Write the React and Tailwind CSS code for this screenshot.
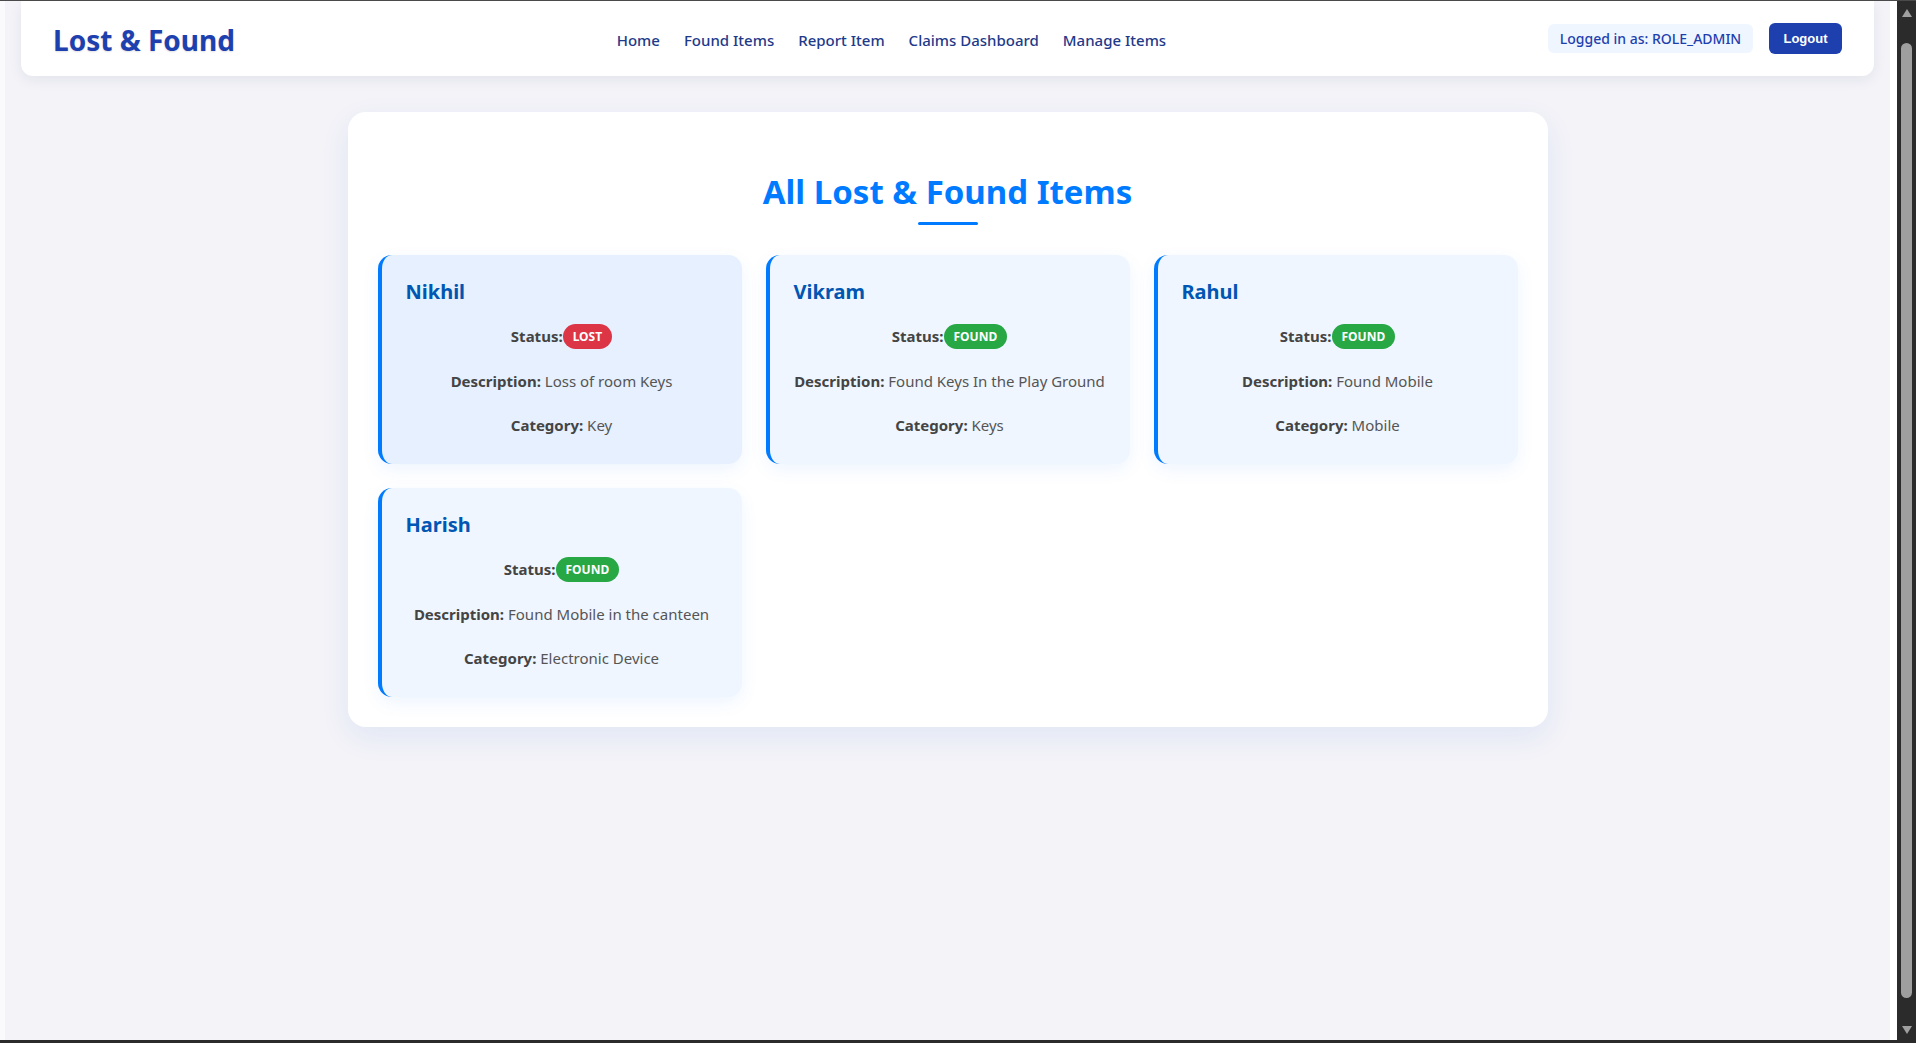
import React from "react";

const items = [
  { id: 1, name: "Nikhil", status: "LOST", description: "Loss of room Keys", category: "Key", active: true },
  { id: 2, name: "Vikram", status: "FOUND", description: "Found Keys In the Play Ground", category: "Keys" },
  { id: 3, name: "Rahul", status: "FOUND", description: "Found Mobile", category: "Mobile" },
  { id: 4, name: "Harish", status: "FOUND", description: "Found Mobile in the canteen", category: "Electronic Device" },
];

const navLinks = ["Home", "Found Items", "Report Item", "Claims Dashboard", "Manage Items"];

const Navbar = () => {
  return (
    <nav className="mx-4 flex h-[75px] items-center justify-between rounded-b-xl bg-white px-8 shadow-[0_4px_14px_rgba(30,41,90,0.07)]">
      <h1 className="mt-[3px] text-[28px] font-bold leading-9 text-[#1e40af] [text-shadow:0_1px_2px_rgba(0,0,0,0.12)]">
        Lost &amp; Found
      </h1>
      <div className="mt-[3px] flex items-center gap-6">
        {navLinks.map((link) => (
          <a key={link} href="#" className="text-[15px] font-medium text-[#1e3a8a]">
            {link}
          </a>
        ))}
      </div>
      <div className="flex items-center gap-4">
        <span className="flex h-[29px] w-[205px] items-center justify-center rounded-md bg-[#eff6ff] text-[14px] font-medium text-[#1e40af]">
          Logged in as: ROLE_ADMIN
        </span>
        <button className="flex h-[31px] w-[73px] items-center justify-center rounded-md bg-[#1e40af] font-['Liberation_Sans',sans-serif] text-[13px] font-bold text-white">
          Logout
        </button>
      </div>
    </nav>
  );
};

const ItemCard = ({ item }) => {
  const lost = item.status === "LOST";
  return (
    <div
      className={`flex flex-col rounded-[14px] border-l-4 border-[#007bff] px-5 pb-[27px] pt-[23px] shadow-[0_6px_18px_rgba(0,110,255,0.07)] ${
        item.active ? "bg-[#e6f0fe]" : "bg-[#eff6ff]"
      }`}
    >
      <h3 className="ml-1 text-[20px] font-bold leading-7 text-[#0056b3]">{item.name}</h3>
      <div className="mt-[18px] flex flex-col gap-5 text-[15px] text-[#555]">
        <div className="flex h-[25px] items-center justify-center">
          <span className="font-bold text-[#444]">Status:</span>
          <span
            className={`flex h-[25px] items-center rounded-full px-[10px] text-[12px] font-bold text-white ${
              lost ? "bg-[#dc3545]" : "bg-[#28a745]"
            }`}
          >
            {item.status}
          </span>
        </div>
        <p className="whitespace-nowrap text-center leading-6">
          <span className="font-bold text-[#444]">Description:</span> {item.description}
        </p>
        <p className="whitespace-nowrap text-center leading-6">
          <span className="font-bold text-[#444]">Category:</span> {item.category}
        </p>
      </div>
    </div>
  );
};

const Scrollbar = () => {
  return (
    <div className="flex w-[19px] flex-col items-center bg-[#2b2b2b] pb-[6px] pt-[8px]">
      <div className="h-0 w-0 border-x-[5px] border-b-[8px] border-x-transparent border-b-[#9f9f9f]" />
      <div className="mt-[26px] w-[11px] flex-1 rounded-full bg-[#9f9f9f]" />
      <div className="mt-[28px] h-0 w-0 border-x-[5px] border-t-[8px] border-x-transparent border-t-[#9f9f9f]" />
    </div>
  );
};

export default function App() {
  return (
    <div className="flex h-screen flex-col overflow-hidden font-['Noto_Sans',sans-serif]">
      <div className="h-px bg-[#4a4a4a]" />
      <div className="flex min-h-0 flex-1">
        <div className="w-[5px] bg-[#fafafc]" />
        <div className="flex-1 overflow-hidden bg-[#f3f3f8]">
          <Navbar />
          <main className="mx-auto mt-9 w-[1200px] rounded-[18px] bg-white p-[30px] shadow-[0_10px_30px_rgba(0,86,200,0.08)]">
            <div className="flex flex-col items-center pt-[30px]">
              <h2 className="text-[33px] font-bold leading-10 text-[#007bff]">All Lost &amp; Found Items</h2>
              <div className="mt-[10px] h-[3px] w-[60px] rounded-full bg-[#007bff]" />
            </div>
            <div className="mt-[30px] grid grid-cols-3 gap-6">
              {items.map((item) => (
                <ItemCard key={item.id} item={item} />
              ))}
            </div>
          </main>
        </div>
        <div className="w-[7px] bg-white" />
        <Scrollbar />
      </div>
      <div className="h-[3px] bg-[#2b2b2b]" />
    </div>
  );
}
